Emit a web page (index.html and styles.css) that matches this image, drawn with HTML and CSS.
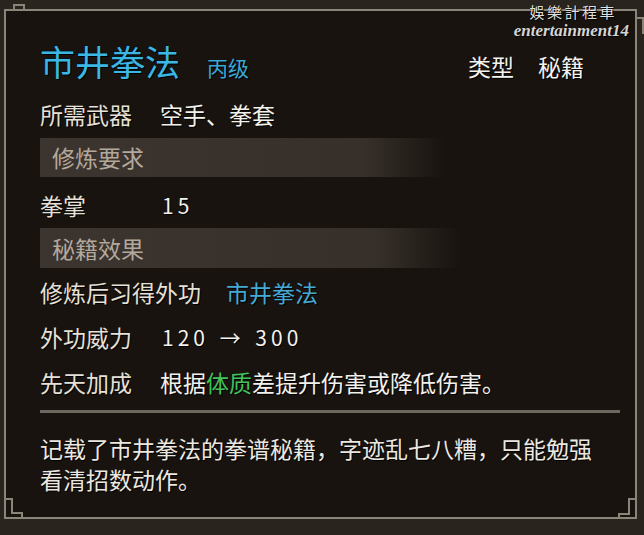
FILE: index.html
```html
<!DOCTYPE html>
<html lang="zh">
<head>
<meta charset="utf-8">
<link rel="stylesheet" href="styles.css">
</head>
<body>
<div class="panel">
  <svg class="corner corner-tl" width="30" height="30" viewBox="0 0 30 30"><path d="M1 30 V6 H10 V1 H20 V6 H30" /></svg>
  <svg class="corner corner-tr" width="30" height="30" viewBox="0 0 30 30"><path d="M0 6 H22 V14 H29 V30" /></svg>
  <svg class="corner corner-bl" width="30" height="30" viewBox="0 0 30 30"><path d="M1 0 V10 H8 V24 H18 V29 H30" /></svg>
  <svg class="corner corner-br" width="30" height="30" viewBox="0 0 30 30"><path d="M0 29 H12 V25 H22 V10 H29 V0" /></svg>

  <div class="header">
    <span class="title">市井拳法</span>
    <span class="grade">丙级</span>
    <span class="type"><span>类型</span><span>秘籍</span></span>
  </div>

  <div class="row first">
    <span class="label">所需武器</span>
    <span class="value">空手、拳套</span>
  </div>

  <div class="bar">修炼要求</div>

  <div class="row req">
    <span class="label">拳掌</span>
    <span class="value num">15</span>
  </div>

  <div class="bar bar-wide">秘籍效果</div>

  <div class="effects">
    <div class="row">
      <span class="label">修炼后习得外功</span>
      <span class="value cyan">市井拳法</span>
    </div>
    <div class="row">
      <span class="label">外功威力</span>
      <span class="value num">120 → 300</span>
    </div>
    <div class="row">
      <span class="label">先天加成</span>
      <span class="value">根据<span class="green">体质</span>差提升伤害或降低伤害。</span>
    </div>
  </div>

  <div class="divider"></div>

  <p class="desc">记载了市井拳法的拳谱秘籍，字迹乱七八糟，只能勉强看清招数动作。</p>
</div>

<div class="watermark">
  <div class="wm-cn">娛樂計程車</div>
  <div class="wm-en">entertainment14</div>
</div>
</body>
</html>
```

FILE: styles.css
```css
html, body {
  margin: 0;
  padding: 0;
}

body {
  width: 644px;
  height: 535px;
  overflow: hidden;
  position: relative;
  background: #2a241f;
  font-family: "Noto Sans CJK SC", "Noto Sans", sans-serif;
  color: #ebe6dc;
}

.panel {
  position: relative;
  box-sizing: border-box;
  width: 633px;
  height: 510px;
  margin: 9px 0 0 4px;
  border: 2px solid #8a8479;
  background: #18130f;
  padding: 30px 15px 0 34px;
}

.corner {
  position: absolute;
  fill: none;
  stroke: #8a8479;
  stroke-width: 2;
}

.corner-tl { left: -2px; top: -7px; }
.corner-tr { right: -9px; top: -7px; }
.corner-bl { left: -2px; bottom: -2px; }
.corner-br { right: -2px; bottom: -2px; }

.header {
  display: flex;
  align-items: baseline;
  height: 40px;
  margin-right: 36px;
}

.title {
  font-size: 35px;
  line-height: 40px;
  color: #3cb6e2;
  text-shadow: 1px 1px 0 #000, -1px -1px 0 #02141c;
}

.grade {
  font-size: 21px;
  margin-left: 27px;
  color: #3aa8d6;
  text-shadow: 1px 1px 0 #000;
}

.type {
  margin-left: auto;
  display: flex;
  gap: 24px;
  font-size: 23px;
  color: #f4f2ee;
  text-shadow: 1px 1px 0 #000;
}

.row {
  display: flex;
  height: 45px;
  line-height: 45px;
  font-size: 23px;
  text-shadow: 1px 1px 0 #000;
}

.row.first {
  margin-top: 11px;
}

.row.req {
  margin-top: 6px;
}

.label {
  min-width: 95px;
  margin-right: 25px;
  color: #e6e0d6;
  white-space: nowrap;
}

.value {
  color: #f3f1ec;
  white-space: nowrap;
}

.num {
  font-size: 21px;
  letter-spacing: 4px;
  word-spacing: 2px;
  padding-left: 2px;
}

.cyan {
  color: #45a9d4;
}

.green {
  color: #42c25a;
}

.bar {
  width: 405px;
  height: 39px;
  line-height: 39px;
  margin-top: 1px;
  padding-left: 12px;
  box-sizing: border-box;
  font-size: 23px;
  color: #b3a89c;
  background: linear-gradient(to right, #3b342f 0%, #37302a 80%, rgba(55, 48, 42, 0) 100%);
}

.bar-wide {
  width: 420px;
  height: 40px;
  line-height: 40px;
  margin-top: 0;
}

.effects {
  margin-top: 2px;
}

.divider {
  margin-top: 5px;
  height: 3px;
  background: #6c675f;
}

.desc {
  margin: 20px 0 0;
  max-width: 560px;
  font-size: 23px;
  line-height: 31px;
  color: #ece8e0;
  text-shadow: 1px 1px 0 #000;
}

.watermark {
  position: absolute;
  top: 2px;
  right: 15px;
  text-align: right;
  color: #dedede;
  text-shadow: 1px 1px 1px #000;
}

.wm-cn {
  font-family: "Noto Sans CJK TC", sans-serif;
  font-size: 15px;
  line-height: 20px;
  letter-spacing: 2.5px;
  margin-right: 12px;
}

.wm-en {
  font-family: "Liberation Serif", serif;
  font-style: italic;
  font-weight: bold;
  font-size: 17px;
  line-height: 18px;
  color: #d4d4d4;
}
```
